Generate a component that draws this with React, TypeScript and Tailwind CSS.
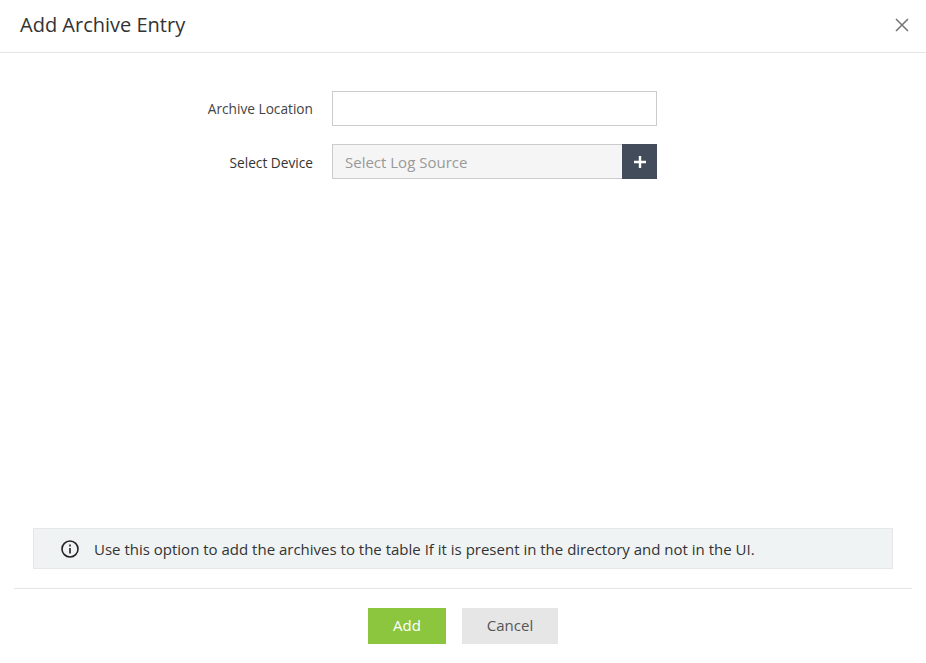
import React from "react";

export default function App() {
  return (
    <div className="w-[926px] h-[663px] bg-white flex flex-col font-['Open_Sans',sans-serif] text-[#333]">
      <div className="h-[53px] shrink-0 border-b border-[#e5e5e5] flex items-center justify-between pl-5 pr-4">
        <h1 className="text-[20px] leading-[27px] text-[#333] mb-[3px]">Add Archive Entry</h1>
        <svg width="16" height="16" viewBox="0 0 16 16" fill="none" stroke="#777" strokeWidth="1.6" className="mb-[3px]"><path d="M2 2l12 12M14 2L2 14" /></svg>
      </div>
      <div className="flex-1 flex flex-col pt-[38px] px-[33px]">
        <div className="flex flex-col gap-[18px]">
          <div className="flex items-center">
            <label className="w-[280px] text-right text-[13.7px] leading-[20px] pt-px text-[#444]">Archive Location</label>
            <input className="ml-[19px] w-[325px] h-[35px] border border-[#ccc] bg-white" />
          </div>
          <div className="flex items-center">
            <label className="w-[280px] text-right text-[13.7px] leading-[20px] pt-[2px] text-[#333]">Select Device</label>
            <div className="ml-[19px] w-[325px] h-[35px] flex">
              <div className="flex-1 bg-[#f5f5f5] border border-[#ccc] border-r-0 flex items-center pl-[12px] pt-px text-[15px] text-[#999]">Select Log Source</div>
              <button className="w-[35px] bg-[#434c5b] flex items-center justify-center">
                <svg width="12" height="12" viewBox="0 0 12 12" stroke="#fff" strokeWidth="2.4"><path d="M6 0v12M0 6h12" /></svg>
              </button>
            </div>
          </div>
        </div>
        <div className="mt-auto h-[41px] border border-[#e6e8e8] bg-[#eff3f4] flex items-center pl-[27px] gap-[15px] text-[15px] text-[#333] mb-[19px]">
          <svg width="18" height="18" viewBox="0 0 18 18" fill="none" stroke="#222" strokeWidth="1.6"><circle cx="9" cy="9" r="8" /><path d="M9 8v5.5M9 4.6v1.8" /></svg>
          <span className="pt-px">Use this option to add the archives to the table If it is present in the directory and not in the UI.</span>
        </div>
      </div>
      <div className="mx-[14px] h-[75px] shrink-0 border-t border-[#e5e5e5] flex justify-center gap-4 pt-[19px]">
        <button className="w-[78px] h-[36px] bg-[#8cc63f] text-white text-[15px] pb-[2px]">Add</button>
        <button className="w-[96px] h-[36px] bg-[#e6e6e6] text-[#555] text-[15px] pb-[2px]">Cancel</button>
      </div>
    </div>
  );
}
